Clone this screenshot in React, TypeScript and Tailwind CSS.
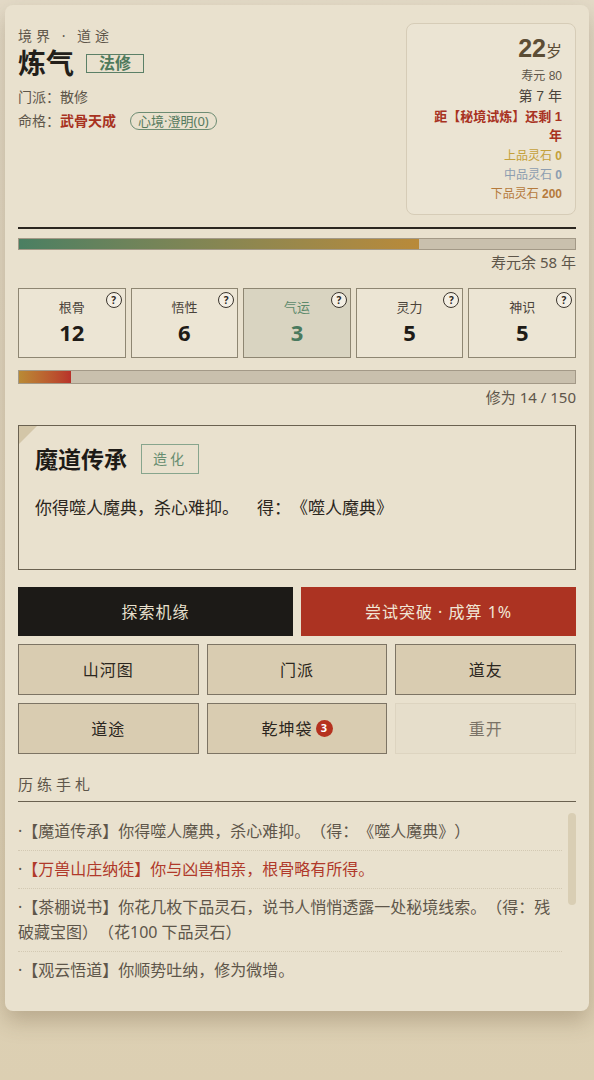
import { ReactNode } from "react";

const font = "font-['Noto_Sans','Noto_Sans_CJK_SC',sans-serif] [text-spacing-trim:space-all]";

type Stat = { label: string; value: number; active?: boolean };

const stats: Stat[] = [
  { label: "根骨", value: 12 },
  { label: "悟性", value: 6 },
  { label: "气运", value: 3, active: true },
  { label: "灵力", value: 5 },
  { label: "神识", value: 5 },
];

const logs: { text: ReactNode; hot?: boolean }[] = [
  { text: "【魔道传承】你得噬人魔典，杀心难抑。（得：《噬人魔典》）" },
  { text: "【万兽山庄纳徒】你与凶兽相亲，根骨略有所得。", hot: true },
  {
    text: "【茶棚说书】你花几枚下品灵石，说书人悄悄透露一处秘境线索。（得：残破藏宝图）（花100 下品灵石）",
  },
  { text: "【观云悟道】你顺势吐纳，修为微增。" },
];

function HelpDot() {
  return (
    <span className="absolute top-[3px] right-[3px] flex h-[16px] w-[16px] items-center justify-center rounded-full border-[1.5px] border-[#3a342c] bg-[#f4efe4] text-[10px] font-bold leading-none text-[#2b2620]">
      ?
    </span>
  );
}

function NavButton({ children, muted }: { children: ReactNode; muted?: boolean }) {
  return (
    <button
      className={
        muted
          ? "flex h-[51px] items-center justify-center border border-[#ddd4c0] bg-[#e6decb] text-[16px] tracking-[1px] text-[#7a7266]"
          : "flex h-[51px] items-center justify-center border border-[#7d7464] bg-[#d9ccb1] text-[16px] tracking-[1px] text-[#2b2620]"
      }
    >
      {children}
    </button>
  );
}

export default function App() {
  return (
    <div className={`min-h-screen bg-gradient-to-b from-[#e4dbc8] to-[#dccfb2] p-[5px] ${font}`}>
      <div className="rounded-lg bg-[#e9e1ce] px-[13px] pt-[18px] pb-[22px] shadow-[0_10px_22px_rgba(90,70,40,0.28)]">
        {/* header */}
        <div className="flex items-start justify-between">
          <div className="pt-[2px]">
            <div className="text-[14px] tracking-[4px] text-[#5e564a]">境界 · 道途</div>
            <div className="flex items-center gap-[12px]">
              <span className="text-[28px] font-bold leading-[34px] text-[#231f1a]">炼气</span>
              <span className="border border-[#5b8067] px-[12px] text-[16px] font-bold leading-[17px] text-[#4e7a5c]">
                法修
              </span>
            </div>
            <div className="mt-[6px] text-[14px] text-[#5e564a]">门派：散修</div>
            <div className="mt-[3px] flex items-center gap-[14px] text-[14px] text-[#5e564a]">
              <span>
                命格：<span className="font-bold text-[#a8321f]">武骨天成</span>
              </span>
              <span className="rounded-full border border-[#6d8c73] px-[7px] text-[13px] leading-[16px] text-[#567a5e]">
                心境·澄明(0)
              </span>
            </div>
          </div>

          <div className="w-[170px] rounded-lg border border-[#d6ccb7] bg-[#ebe4d3] px-[13px] pt-[9px] pb-[10px] text-right font-['Liberation_Sans','Noto_Sans_CJK_SC',sans-serif]">
            <div className="leading-[30px] text-[#5b4d36]">
              <span className="text-[25px] font-bold">22</span>
              <span className="text-[16px]">岁</span>
            </div>
            <div className="text-[12px] leading-[18px] text-[#5e564a]">寿元 80</div>
            <div className="text-[14px] leading-[22px] text-[#4a433a]">第 7 年</div>
            <div className="text-[13px] font-bold leading-[19px] text-[#a8321f]">距【秘境试炼】还剩 1 年</div>
            <div className="mt-[2px] text-[12px] leading-[19px] text-[#c4a03a]">
              上品灵石 <b>0</b>
            </div>
            <div className="text-[12px] leading-[19px] text-[#8d9db0]">
              中品灵石 <b>0</b>
            </div>
            <div className="text-[12px] leading-[19px] text-[#b57a3c]">
              下品灵石 <b>200</b>
            </div>
          </div>
        </div>

        <div className="mt-[12px] h-[2px] bg-[#2b2620]" />

        {/* lifespan */}
        <div className="mt-[9px] h-[12px] border border-[#a39987] bg-[#c9c0ad]">
          <div className="h-full w-[72%] bg-gradient-to-r from-[#4a7f62] to-[#b98a39]" />
        </div>
        <div className="mt-[1px] text-right text-[15px] text-[#5e564a]">寿元余 58 年</div>

        {/* attributes */}
        <div className="mt-[14px] grid grid-cols-5 gap-[5px]">
          {stats.map((s) => (
            <div
              key={s.label}
              className={
                s.active
                  ? "relative flex h-[70px] flex-col items-center justify-center border border-[#8e8672] bg-[#d9d4c1]"
                  : "relative flex h-[70px] flex-col items-center justify-center border border-[#8e8672] bg-[#ece5d4]"
              }
            >
              <HelpDot />
              <span className={s.active ? "text-[13px] text-[#5d8a6c]" : "text-[13px] text-[#4a433a]"}>
                {s.label}
              </span>
              <span
                className={
                  s.active
                    ? "text-[22px] font-bold leading-[30px] text-[#4a7a5e]"
                    : "text-[22px] font-bold leading-[30px] text-[#1e1b17]"
                }
              >
                {s.value}
              </span>
            </div>
          ))}
        </div>

        {/* cultivation */}
        <div className="mt-[12px] h-[14px] border border-[#a39987] bg-[#c9c0ad]">
          <div className="h-full w-[9.3%] bg-gradient-to-r from-[#b98a35] to-[#b8312a]" />
        </div>
        <div className="mt-[2px] text-right text-[15px] text-[#5e564a]">修为 14 / 150</div>

        {/* event */}
        <div className="relative mt-[17px] h-[145px] border border-[#6a6150] px-[16px] pt-[17px]">
          <div className="absolute top-0 left-0 h-[18px] w-[18px] bg-[#d3c6a8] [clip-path:polygon(0_0,100%_0,0_100%)]" />
          <div className="flex items-center gap-[14px]">
            <span className="text-[23px] font-bold leading-[32px] text-[#1e1b17]">魔道传承</span>
            <span className="border border-[#87a58d] px-[11px] text-[14px] leading-[28px] tracking-[3px] text-[#678d70]">
              造化
            </span>
          </div>
          <div className="mt-[20px] text-[17px] text-[#2b2620]">
            你得噬人魔典，杀心难抑。<span className="ml-[18px]">得：《噬人魔典》</span>
          </div>
        </div>

        {/* actions */}
        <div className="mt-[17px] grid grid-cols-2 gap-[8px]">
          <button className="h-[49px] bg-[#1c1a17] text-[16px] tracking-[1px] text-[#e9e1ce]">探索机缘</button>
          <button className="h-[49px] bg-[#ac3322] text-[16px] tracking-[1px] text-[#f1e6d6]">
            尝试突破 · 成算 1%
          </button>
        </div>
        <div className="mt-[8px] grid grid-cols-3 gap-[8px]">
          <NavButton>山河图</NavButton>
          <NavButton>门派</NavButton>
          <NavButton>道友</NavButton>
          <NavButton>道途</NavButton>
          <NavButton>
            乾坤袋
            <span className="ml-[3px] flex h-[17px] w-[17px] items-center justify-center rounded-full bg-[#b5311f] text-[11px] font-bold tracking-normal text-white">
              3
            </span>
          </NavButton>
          <NavButton muted>重开</NavButton>
        </div>

        {/* journal */}
        <div className="mt-[19px] border-b border-[#6a6150] pb-[5px] text-[15px] tracking-[4px] text-[#5e564a]">
          历练手札
        </div>
        <div className="flex gap-[6px] pt-[11px]">
          <div className="flex-1">
            {logs.map((l, i) => (
              <div
                key={i}
                className={
                  i < logs.length - 1
                    ? "border-b border-dotted border-[#d3c9b3] py-[6px] text-[16px] leading-[25px]"
                    : "py-[6px] text-[16px] leading-[25px]"
                }
              >
                <span className="text-[#5e564a]">·</span>
                <span className={l.hot ? "text-[#b0392a]" : "text-[#5e564a]"}>{l.text}</span>
              </div>
            ))}
          </div>
          <div className="w-[8px]">
            <div className="h-[92px] rounded-sm bg-[#d9ceb4]" />
          </div>
        </div>
      </div>
    </div>
  );
}
